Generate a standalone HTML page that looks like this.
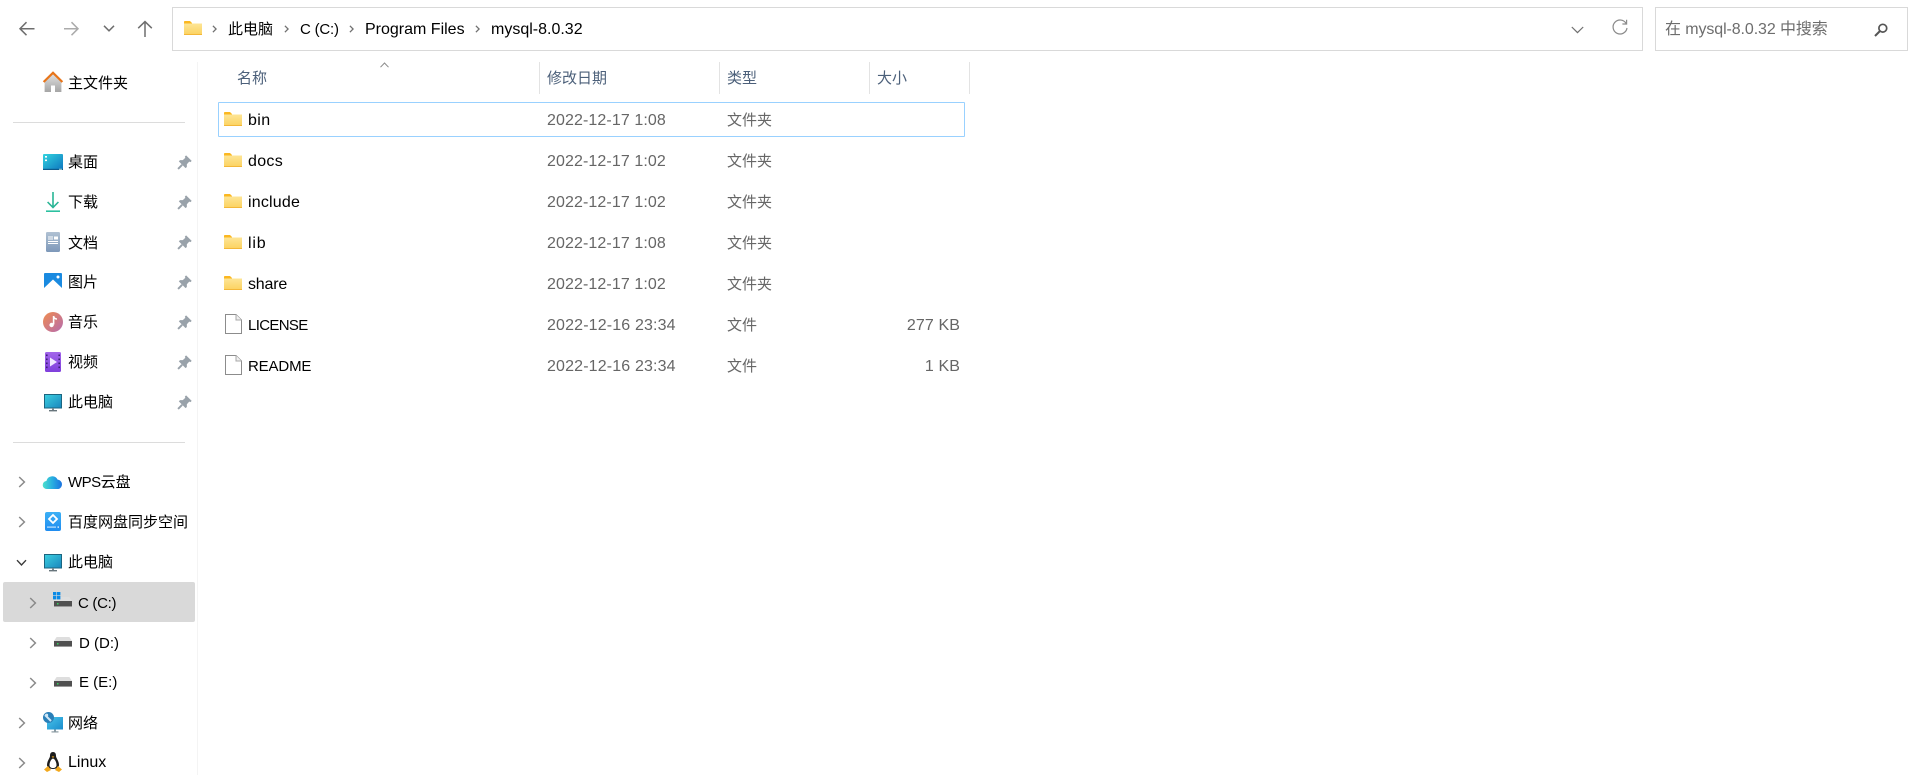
<!DOCTYPE html>
<html lang="zh">
<head>
<meta charset="utf-8">
<title>mysql-8.0.32</title>
<style>
html,body{margin:0;padding:0;background:#fff;width:1920px;height:775px;overflow:hidden}
body{position:relative;font-family:"Liberation Sans","Noto Sans CJK SC",sans-serif;color:#000}
.t{position:absolute;height:24px;line-height:24px;white-space:nowrap;font-size:15px}
.l{font-size:16px}
.s{font-size:15px}
.d{color:#666;font-size:16px;letter-spacing:.1px}
.g{color:#666;font-size:15px}
.h{color:#4c607a;font-size:15px}
.box{position:absolute;box-sizing:border-box;border:1px solid #d9d9d9;background:#fff}
.line{position:absolute;background:#e3e3e3}
svg{position:absolute;overflow:visible}
</style>
</head>
<body>
<svg width="0" height="0" style="position:absolute">
<defs>
<linearGradient id="fo" x1="0" y1="0" x2="0" y2="1"><stop offset="0" stop-color="#fde596"/><stop offset="1" stop-color="#fcd25f"/></linearGradient>
<linearGradient id="de" x1="0" y1="0" x2="1" y2="1"><stop offset="0" stop-color="#33d4df"/><stop offset="1" stop-color="#0d75bf"/></linearGradient>
<linearGradient id="dc" x1="0" y1="0" x2="0" y2="1"><stop offset="0" stop-color="#b0c1d3"/><stop offset="1" stop-color="#7d98b9"/></linearGradient>
<linearGradient id="mu" x1="0" y1="0" x2="1" y2="1"><stop offset="0" stop-color="#f08c4e"/><stop offset="1" stop-color="#b56bb0"/></linearGradient>
<linearGradient id="vi" x1="0" y1="0" x2="0" y2="1"><stop offset="0" stop-color="#a266ea"/><stop offset="1" stop-color="#7f3fdc"/></linearGradient>
<linearGradient id="pc" x1="0" y1="0" x2="1" y2="1"><stop offset="0" stop-color="#3bd0e0"/><stop offset="1" stop-color="#1a86bd"/></linearGradient>
<linearGradient id="ho" x1="0" y1="0" x2="0" y2="1"><stop offset="0" stop-color="#e0e0e0"/><stop offset="1" stop-color="#a5a5a5"/></linearGradient>
<linearGradient id="cl" x1="0" y1="0" x2="1" y2="0"><stop offset="0" stop-color="#4ce0cc"/><stop offset=".5" stop-color="#28aee0"/><stop offset="1" stop-color="#1a72e0"/></linearGradient>
<linearGradient id="bd" x1="0" y1="0" x2="0" y2="1"><stop offset="0" stop-color="#3cb0f5"/><stop offset="1" stop-color="#1f8cf0"/></linearGradient>
<linearGradient id="ne" x1="0" y1="0" x2="1" y2="1"><stop offset="0" stop-color="#48c4ea"/><stop offset="1" stop-color="#1a8ccc"/></linearGradient>
<symbol id="folder" viewBox="0 0 18 14" width="18" height="14">
<path d="M0 .8Q0 0 .8 0H6L8 2V4H0Z" fill="#fbb720"/>
<path d="M0 2.5H18V13.2Q18 14 17 14H1Q0 14 0 13.2Z" fill="url(#fo)"/>
<rect x="0" y="13" width="18" height="1" fill="#f3b738"/>
</symbol>
<symbol id="file" viewBox="0 0 17 20" width="17" height="20">
<path d="M.5.5H11L16.5 6V19.5H.5Z" fill="#fff" stroke="#8c8c8c"/>
<path d="M11 .5V6H16.5" fill="#f0f0f0" stroke="#a8a8a8"/>
</symbol>
<symbol id="pin" viewBox="0 0 14 14" width="15" height="15">
<path d="M8.5.3 13.7 5.5 12.6 6.7 11.4 6.2 9.2 8.6 9.2 11.2 8 12.3 1.7 6 2.8 4.8 5.4 4.8 7.8 2.6 7.3 1.5Z" fill="#99a2aa"/>
<path d="M4.8 9.2 1 13" stroke="#99a2aa" stroke-width="1.8" fill="none"/>
</symbol>
<symbol id="cr" viewBox="0 0 8 12" width="8" height="12">
<path d="M1.2 1 6.4 6 1.2 11" fill="none" stroke="#8a8a8a" stroke-width="1.5"/>
</symbol>
<symbol id="sep" viewBox="0 0 6 10" width="5" height="8">
<path d="M1 1 5 5 1 9" fill="none" stroke="#707070" stroke-width="1.6"/>
</symbol>
<symbol id="pcs" viewBox="0 0 18 18" width="18" height="18">
<rect x=".5" y=".5" width="17" height="13.5" fill="url(#pc)" stroke="#1b6580"/>
<rect x="8" y="14" width="2" height="2.2" fill="#7a8a92"/>
<rect x="5" y="16" width="8" height="1.4" fill="#68757c"/>
</symbol>
<symbol id="disk" viewBox="0 0 18 10" width="18" height="10">
<path d="M2.6 0H15.4L18 4H0Z" fill="#dedede"/>
<rect x="0" y="4" width="18" height="6" fill="#505050"/>
<rect x="0" y="9" width="18" height="1" fill="#9a9a9a"/>
<rect x="3" y="6" width="1.5" height="1.5" fill="#35d060"/>
</symbol>
</defs>
</svg>

<!-- toolbar nav -->
<svg style="left:18px;top:20px" width="18" height="18" viewBox="0 0 18 18"><path d="M2 8.7H16.5M8.5 2.2 2 8.7 8.5 15.2" fill="none" stroke="#6e6e6e" stroke-width="1.5"/></svg>
<svg style="left:62px;top:20px" width="18" height="18" viewBox="0 0 18 18"><path d="M2 8.7H16M9.5 2.2 16 8.7 9.5 15.2" fill="none" stroke="#ababab" stroke-width="1.5"/></svg>
<svg style="left:103px;top:24px" width="12" height="9" viewBox="0 0 12 9"><path d="M1 1.8 6 6.8 11 1.8" fill="none" stroke="#6e6e6e" stroke-width="1.5"/></svg>
<svg style="left:137px;top:20px" width="16" height="18" viewBox="0 0 16 18"><path d="M8 17V1.6M1.2 8.2 8 1.6 14.8 8.2" fill="none" stroke="#6e6e6e" stroke-width="1.5"/></svg>

<!-- address bar -->
<div class="box" style="left:172px;top:7px;width:1471px;height:44px"></div>
<svg style="left:184px;top:21px" width="18" height="14"><use href="#folder"/></svg>
<svg style="left:212px;top:25px" width="5" height="8"><use href="#sep"/></svg>
<div class="t s" style="left:228px;top:18px">此电脑</div>
<svg style="left:284px;top:25px" width="5" height="8"><use href="#sep"/></svg>
<div class="t" style="left:300px;top:18px;letter-spacing:-.2px">C (C:)</div>
<svg style="left:349px;top:25px" width="5" height="8"><use href="#sep"/></svg>
<div class="t l" style="left:365px;top:18px">Program Files</div>
<svg style="left:475px;top:25px" width="5" height="8"><use href="#sep"/></svg>
<div class="t l" style="left:491px;top:18px">mysql-8.0.32</div>
<svg style="left:1571px;top:26px" width="13" height="8" viewBox="0 0 13 8"><path d="M.8 1 6.5 6.6 12.2 1" fill="none" stroke="#707070" stroke-width="1.2"/></svg>
<svg style="left:1611px;top:19px" width="18" height="18" viewBox="0 0 18 18"><path d="M15.2 4.6A7 7 0 1 0 16 9" fill="none" stroke="#8a8a8a" stroke-width="1.2"/><path d="M15.6 .8V5H11.4" fill="none" stroke="#8a8a8a" stroke-width="1.2"/></svg>

<!-- search -->
<div class="box" style="left:1655px;top:7px;width:253px;height:44px"></div>
<div class="t d" style="left:1665px;top:18px;color:#6d6d6d;letter-spacing:-.1px">在 mysql-8.0.32 中搜索</div>
<svg style="left:1874px;top:23px" width="14" height="14" viewBox="0 0 14 14"><circle cx="8.8" cy="5.2" r="3.9" fill="none" stroke="#555" stroke-width="1.7"/><path d="M6 8 1 13" stroke="#555" stroke-width="2" fill="none"/></svg>

<!-- sidebar -->
<div class="line" style="left:197px;top:62px;width:1px;height:713px;background:#f4f4f4"></div>
<svg style="left:43px;top:72px" width="20" height="20" viewBox="0 0 20 20"><path d="M1.6 10 10 2 18.4 10V20H12V13.5H8V20H1.6Z" fill="url(#ho)"/><path d="M.6 10 10 .8 19.4 10" fill="none" stroke="#e8751a" stroke-width="2.2"/></svg>
<div class="t" style="left:68px;top:72px">主文件夹</div>
<div class="line" style="left:13px;top:122px;width:172px;height:1px;background:#dcdcdc"></div>

<svg style="left:43px;top:154px" width="20" height="16" viewBox="0 0 20 16"><rect width="20" height="16" rx="1" fill="url(#de)"/><rect y="14.8" width="20" height="1.2" fill="#0d5a8c"/><rect x="2" y="2" width="2" height="1.6" fill="#fff"/><rect x="2" y="5.5" width="2" height="1.6" fill="#fff"/><rect x="16" y="14.8" width="3" height=".8" fill="#cfe"/></svg>
<div class="t" style="left:68px;top:151px">桌面</div>
<svg style="left:177px;top:155px" width="15" height="15"><use href="#pin"/></svg>

<svg style="left:46px;top:192px" width="14" height="20" viewBox="0 0 14 20"><path d="M7 0V15.5M1.6 10 7 15.5 12.4 10" fill="none" stroke="#28b595" stroke-width="1.6"/><rect y="18.4" width="14" height="1.6" fill="#2cc0a0"/></svg>
<div class="t" style="left:68px;top:191px">下载</div>
<svg style="left:177px;top:195px" width="15" height="15"><use href="#pin"/></svg>

<svg style="left:46px;top:232px" width="14" height="20" viewBox="0 0 14 20"><rect width="14" height="20" rx="1.2" fill="url(#dc)"/><rect x="2" y="4.5" width="5" height="1" fill="#fff"/><rect x="2" y="6.5" width="5" height="1" fill="#fff"/><rect x="8" y="4.5" width="4" height="3" fill="#fff"/><rect x="2" y="9" width="10" height="1" fill="#fff"/><rect x="2" y="11" width="10" height="1" fill="#fff"/></svg>
<div class="t" style="left:68px;top:232px">文档</div>
<svg style="left:177px;top:235px" width="15" height="15"><use href="#pin"/></svg>

<svg style="left:44px;top:273px" width="18" height="18" viewBox="0 0 18 18"><rect width="18" height="18" rx="1" fill="#1a8ae0"/><path d="M0 15 9 6.5 18 15V18H0Z" fill="#fff"/><circle cx="14" cy="4" r="1.5" fill="#fff"/></svg>
<div class="t" style="left:68px;top:271px">图片</div>
<svg style="left:177px;top:275px" width="15" height="15"><use href="#pin"/></svg>

<svg style="left:43px;top:312px" width="20" height="20" viewBox="0 0 20 20"><circle cx="10" cy="10" r="10" fill="url(#mu)"/><path d="M10.6 4V12.5" stroke="#fff" stroke-width="1.6"/><circle cx="8.6" cy="13" r="2.2" fill="#fff"/><path d="M10.6 4Q11 7 14 7" fill="none" stroke="#fff" stroke-width="1.4"/></svg>
<div class="t" style="left:68px;top:311px">音乐</div>
<svg style="left:177px;top:315px" width="15" height="15"><use href="#pin"/></svg>

<svg style="left:45px;top:352px" width="16" height="20" viewBox="0 0 16 20"><rect width="16" height="20" rx="1.5" fill="url(#vi)"/><path d="M5 5.5 12 10 5 14.5Z" fill="#f0e8ff"/><g fill="#3c1f78"><rect x="1" y="2.5" width="1.6" height="1.6"/><rect x="1" y="6.5" width="1.6" height="1.6"/><rect x="1" y="10.5" width="1.6" height="1.6"/><rect x="1" y="14.5" width="1.6" height="1.6"/><rect x="13.4" y="2.5" width="1.6" height="1.6"/><rect x="13.4" y="6.5" width="1.6" height="1.6"/><rect x="13.4" y="10.5" width="1.6" height="1.6"/><rect x="13.4" y="14.5" width="1.6" height="1.6"/></g></svg>
<div class="t" style="left:68px;top:351px">视频</div>
<svg style="left:177px;top:355px" width="15" height="15"><use href="#pin"/></svg>

<svg style="left:44px;top:394px" width="18" height="18"><use href="#pcs"/></svg>
<div class="t" style="left:68px;top:391px">此电脑</div>
<svg style="left:177px;top:395px" width="15" height="15"><use href="#pin"/></svg>

<div class="line" style="left:13px;top:442px;width:172px;height:1px;background:#dcdcdc"></div>

<svg style="left:18px;top:476px" width="8" height="12"><use href="#cr"/></svg>
<svg style="left:43px;top:475px" width="20" height="14" viewBox="0 0 20 14"><path d="M4 14A4 4 0 0 1 3.4 6 6 6 0 0 1 14.6 4.6 4.8 4.8 0 0 1 15.5 14Z" fill="url(#cl)"/></svg>
<div class="t" style="left:68px;top:471px"><span style="letter-spacing:-.5px">WPS</span>云盘</div>

<svg style="left:18px;top:516px" width="8" height="12"><use href="#cr"/></svg>
<svg style="left:45px;top:512px" width="16" height="19" viewBox="0 0 16 19"><rect width="16" height="19" rx="2" fill="url(#bd)"/><path d="M8 3 12 7 8 11 4 7Z" fill="none" stroke="#fff" stroke-width="1.8"/><rect x="2" y="14.5" width="9" height="1.2" fill="#bfe3ff"/><rect x="12.5" y="14.5" width="1.5" height="1.2" fill="#fff"/></svg>
<div class="t" style="left:68px;top:511px">百度网盘同步空间</div>

<svg style="left:16px;top:559px" width="11" height="8" viewBox="0 0 11 8"><path d="M1 1.2 5.5 6 10 1.2" fill="none" stroke="#3a3a3a" stroke-width="1.4"/></svg>
<svg style="left:44px;top:554px" width="18" height="18"><use href="#pcs"/></svg>
<div class="t" style="left:68px;top:551px">此电脑</div>

<div style="position:absolute;left:3px;top:582px;width:192px;height:40px;background:#d9d9d9;border-radius:2px"></div>
<svg style="left:29px;top:597px" width="8" height="12"><use href="#cr"/></svg>
<svg style="left:54px;top:597px" width="18" height="10"><use href="#disk"/></svg>
<svg style="left:53px;top:592px" width="8" height="8" viewBox="0 0 8 8"><g fill="#0a8ae6"><rect width="3.4" height="3.4"/><rect x="4" width="3.4" height="3.4"/><rect y="4" width="3.4" height="3.4"/><rect x="4" y="4" width="3.4" height="3.4"/></g></svg>
<div class="t" style="left:78px;top:592px;letter-spacing:-.3px">C (C:)</div>

<svg style="left:29px;top:637px" width="8" height="12"><use href="#cr"/></svg>
<svg style="left:54px;top:637px" width="18" height="10"><use href="#disk"/></svg>
<div class="t" style="left:79px;top:632px">D (D:)</div>

<svg style="left:29px;top:677px" width="8" height="12"><use href="#cr"/></svg>
<svg style="left:54px;top:677px" width="18" height="10"><use href="#disk"/></svg>
<div class="t" style="left:79px;top:671px">E (E:)</div>

<svg style="left:18px;top:717px" width="8" height="12"><use href="#cr"/></svg>
<svg style="left:43px;top:712px" width="20" height="21" viewBox="0 0 20 21"><rect x="4" y="5" width="16" height="12.5" fill="url(#ne)"/><rect x="11" y="17.5" width="2" height="2" fill="#8a9aa2"/><rect x="8.5" y="19.3" width="7" height="1.2" fill="#8a9aa2"/><circle cx="5.5" cy="5.5" r="5.5" fill="#2a7fb8"/><path d="M2 3 8 9" stroke="#cfe6f5" stroke-width="2"/><circle cx="3.6" cy="3.2" r="1.6" fill="#cfe6f5"/></svg>
<div class="t" style="left:68px;top:712px">网络</div>

<svg style="left:18px;top:757px" width="8" height="12"><use href="#cr"/></svg>
<svg style="left:44px;top:752px" width="18" height="20" viewBox="0 0 18 20"><path d="M9 0C6.5 0 6 2 6 4 6 6 3 9 3 13 3 15 5 17 9 17 13 17 15 15 15 13 15 9 12 6 12 4 12 2 11.5 0 9 0Z" fill="#1c1c1c"/><path d="M9 6.5C7 7 5.5 10.5 5.5 13 5.5 15 7 16 9 16 11 16 12.5 15 12.5 13 12.5 10.5 11 7 9 6.5Z" fill="#fff"/><path d="M7.6 4.4H10.4L9 6Z" fill="#f2a81d"/><path d="M0 17.5 4 14 7 18 3 20ZM18 17.5 14 14 11 18 15 20Z" fill="#f2a81d"/></svg>
<div class="t" style="left:68px;top:751px;font-size:16px">Linux</div>

<!-- header -->
<div class="t h" style="left:237px;top:67px">名称</div>
<svg style="left:380px;top:62px" width="9" height="6" viewBox="0 0 9 6"><path d="M.5 5.2 4.5 1 8.5 5.2" fill="none" stroke="#8a8a8a" stroke-width="1"/></svg>
<div class="line" style="left:539px;top:62px;width:1px;height:32px"></div>
<div class="t h" style="left:547px;top:67px">修改日期</div>
<div class="line" style="left:719px;top:62px;width:1px;height:32px"></div>
<div class="t h" style="left:727px;top:67px">类型</div>
<div class="line" style="left:869px;top:62px;width:1px;height:32px"></div>
<div class="t h" style="left:877px;top:67px">大小</div>
<div class="line" style="left:969px;top:62px;width:1px;height:32px"></div>

<!-- rows -->
<div style="position:absolute;box-sizing:border-box;left:218px;top:102px;width:747px;height:35px;border:1px solid #99d1ff;border-radius:1px"></div>

<svg style="left:224px;top:112px" width="18" height="14"><use href="#folder"/></svg>
<div class="t l" style="left:248px;top:109px;letter-spacing:.4px">bin</div>
<div class="t d" style="left:547px;top:109px">2022-12-17 1:08</div>
<div class="t g" style="left:727px;top:109px">文件夹</div>

<svg style="left:224px;top:153px" width="18" height="14"><use href="#folder"/></svg>
<div class="t l" style="left:248px;top:150px;letter-spacing:.3px">docs</div>
<div class="t d" style="left:547px;top:150px">2022-12-17 1:02</div>
<div class="t g" style="left:727px;top:150px">文件夹</div>

<svg style="left:224px;top:194px" width="18" height="14"><use href="#folder"/></svg>
<div class="t l" style="left:248px;top:191px;letter-spacing:.2px">include</div>
<div class="t d" style="left:547px;top:191px">2022-12-17 1:02</div>
<div class="t g" style="left:727px;top:191px">文件夹</div>

<svg style="left:224px;top:235px" width="18" height="14"><use href="#folder"/></svg>
<div class="t l" style="left:248px;top:232px;letter-spacing:.8px">lib</div>
<div class="t d" style="left:547px;top:232px">2022-12-17 1:08</div>
<div class="t g" style="left:727px;top:232px">文件夹</div>

<svg style="left:224px;top:276px" width="18" height="14"><use href="#folder"/></svg>
<div class="t l" style="left:248px;top:273px;letter-spacing:-.2px">share</div>
<div class="t d" style="left:547px;top:273px">2022-12-17 1:02</div>
<div class="t g" style="left:727px;top:273px">文件夹</div>

<svg style="left:225px;top:314px" width="17" height="20"><use href="#file"/></svg>
<div class="t" style="left:248px;top:314px;letter-spacing:-.65px">LICENSE</div>
<div class="t d" style="left:547px;top:314px;letter-spacing:.15px">2022-12-16 23:34</div>
<div class="t g" style="left:727px;top:314px">文件</div>
<div class="t d" style="right:960px;top:314px">277 KB</div>

<svg style="left:225px;top:355px" width="17" height="20"><use href="#file"/></svg>
<div class="t" style="left:248px;top:355px;letter-spacing:-.15px">README</div>
<div class="t d" style="left:547px;top:355px;letter-spacing:.15px">2022-12-16 23:34</div>
<div class="t g" style="left:727px;top:355px">文件</div>
<div class="t d" style="right:960px;top:355px">1 KB</div>
</body>
</html>
